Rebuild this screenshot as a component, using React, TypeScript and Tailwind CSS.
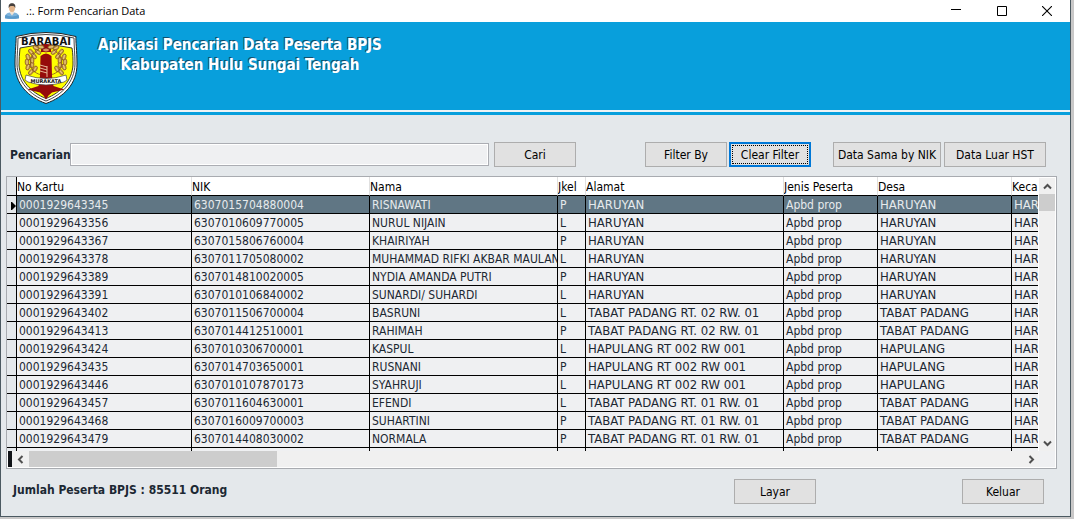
import type { ReactNode } from "react";

type Peserta = {
  kartu: string;
  nik: string;
  nama: string;
  jkel: "L" | "P";
  alamat: string;
  desa: string;
};

const rows: Peserta[] = [
  { kartu: "0001929643345", nik: "6307015704880004", nama: "RISNAWATI", jkel: "P", alamat: "HARUYAN", desa: "HARUYAN" },
  { kartu: "0001929643356", nik: "6307010609770005", nama: "NURUL NIJAIN", jkel: "L", alamat: "HARUYAN", desa: "HARUYAN" },
  { kartu: "0001929643367", nik: "6307015806760004", nama: "KHAIRIYAH", jkel: "P", alamat: "HARUYAN", desa: "HARUYAN" },
  { kartu: "0001929643378", nik: "6307011705080002", nama: "MUHAMMAD RIFKI AKBAR MAULANA", jkel: "L", alamat: "HARUYAN", desa: "HARUYAN" },
  { kartu: "0001929643389", nik: "6307014810020005", nama: "NYDIA AMANDA PUTRI", jkel: "P", alamat: "HARUYAN", desa: "HARUYAN" },
  { kartu: "0001929643391", nik: "6307010106840002", nama: "SUNARDI/ SUHARDI", jkel: "L", alamat: "HARUYAN", desa: "HARUYAN" },
  { kartu: "0001929643402", nik: "6307011506700004", nama: "BASRUNI", jkel: "L", alamat: "TABAT PADANG RT. 02 RW. 01", desa: "TABAT PADANG" },
  { kartu: "0001929643413", nik: "6307014412510001", nama: "RAHIMAH", jkel: "P", alamat: "TABAT PADANG RT. 02 RW. 01", desa: "TABAT PADANG" },
  { kartu: "0001929643424", nik: "6307010306700001", nama: "KASPUL", jkel: "L", alamat: "HAPULANG RT 002 RW 001", desa: "HAPULANG" },
  { kartu: "0001929643435", nik: "6307014703650001", nama: "RUSNANI", jkel: "P", alamat: "HAPULANG RT 002 RW 001", desa: "HAPULANG" },
  { kartu: "0001929643446", nik: "6307010107870173", nama: "SYAHRUJI", jkel: "L", alamat: "HAPULANG RT 002 RW 001", desa: "HAPULANG" },
  { kartu: "0001929643457", nik: "6307011604630001", nama: "EFENDI", jkel: "L", alamat: "TABAT PADANG RT. 01 RW. 01", desa: "TABAT PADANG" },
  { kartu: "0001929643468", nik: "6307016009700003", nama: "SUHARTINI", jkel: "P", alamat: "TABAT PADANG RT. 01 RW. 01", desa: "TABAT PADANG" },
  { kartu: "0001929643479", nik: "6307014408030002", nama: "NORMALA", jkel: "P", alamat: "TABAT PADANG RT. 01 RW. 01", desa: "TABAT PADANG" },
];

const headers = ["No Kartu", "NIK", "Nama", "Jkel", "Alamat", "Jenis Peserta", "Desa", "Kecamatan"];
const cellSizes = ["text-xs", "text-xs", "text-xs", "text-xs", "text-[13px]", "text-xs", "text-[13px]", "text-[13px]"];

function Button({ children, width }: { children: ReactNode; width: string }) {
  return (
    <button
      type="button"
      className={`h-[25px] shrink-0 whitespace-nowrap border border-[#adadad] bg-[#e1e1e1] text-center text-black ${width}`}
    >
      {children}
    </button>
  );
}

function Arrow({ d, label, className }: { d: string; label: string; className: string }) {
  return (
    <button type="button" aria-label={label} className={`flex shrink-0 items-center justify-center ${className}`}>
      <svg width="9" height="9" viewBox="0 0 9 9" fill="none" stroke="#505050" strokeWidth="2">
        <path d={d} />
      </svg>
    </button>
  );
}

function UserIcon() {
  return (
    <svg width="16" height="16" viewBox="0 0 16 16" aria-hidden="true">
      <path d="M1 15.200C.6 11.400 2.600 10 5.600 9.400h4.800c3 .6 5 2 4.600 5.800-4 .9-10 .9-14 0z" fill="#7fb4dc" />
      <path d="M1 15.200c-.1-1.500.1-2.600.7-3.400 3 2.300 9.600 2.300 12.600 0 .6.8.8 1.900.7 3.400-4 .9-10 .9-14 0z" fill="#5a9acb" />
      <path d="M5.600 9.400 8 12.600l2.400-3.200-.8-2H6.400z" fill="#f3e3d2" />
      <ellipse cx="8" cy="5" rx="3" ry="4" fill="#e3b58c" />
      <path d="M4.800 5.300C4.200 1.700 5.600.3 8 .3s3.900 1.400 3.200 5C10.800 3.600 10 3 8 3s-2.800.6-3.200 2.300z" fill="#46403c" />
    </svg>
  );
}

const grains = [
  [17, 40, 40], [14, 35, 20], [13, 30, 0], [14, 25, -20], [17, 20, -40], [22, 16, -60], [27, 15, -80],
  [21, 37, 30], [18, 33, 10], [18, 28, -10], [20, 24, -35], [24, 20, -55],
] as const;

function Wreath() {
  return (
    <g>
      {grains.map(([x, y, r]) => (
        <g key={`${x}-${y}`} transform={`rotate(${r} ${x} ${y})`}>
          <ellipse cx={x} cy={y} rx="1.900" ry="3.200" fill="#cfa04c" stroke="#86541f" strokeWidth=".7" />
          <path d={`M${x} ${y - 2}v4`} fill="none" stroke="#f3da9a" strokeWidth=".7" />
        </g>
      ))}
      <path d="M29 43C16 42 11 27 24 18" fill="none" stroke="#86541f" strokeWidth=".8" />
    </g>
  );
}

function Crest() {
  return (
    <svg width="64" height="72" viewBox="0 0 64 72" role="img" aria-label="Barabai" className="shrink-0">
      <path d="M2 4.500Q32-3.500 62 4.500C61.500 9 63 18 63 32 63 52 50 65 32 71.500 14 65 1 52 1 32 1 18 2.500 9 2 4.500z" fill="#fff" stroke="#222" strokeWidth="1" />
      <path d="M4 6Q32-1 60 6C60 14 61 22 61 32 60.500 50 48 63 32 69 16 63 3.500 50 3 32 3 22 4 14 4 6z" fill="none" stroke="#333" strokeWidth=".9" />
      <path d="M6 16Q32 10 58 16C59 22 59 27 59 33 58 49 47 60.500 32 66.500 17 60.500 6 49 5 33 5 27 5.500 22 6 16z" fill="#ff0" stroke="#222" strokeWidth=".9" />
      <path d="M6 14V7.500Q32 1 58 7.500V14Q32 9 6 14z" fill="#fff" />
      <text x="32" y="12.500" textAnchor="middle" className="font-['DejaVu_Sans'] text-[10px] font-bold" fill="#111">BARABAI</text>
      <path d="M27 13q5-2 10 0v7H27z" fill="#960b0b" />
      <Wreath />
      <g transform="translate(64 0) scale(-1 1)"><Wreath /></g>
      <path d="M26.500 24q5.500-5 11 0l.5 20 1.500 10 11 3.500L38 60.500l-3.500 3L32 67.500l-2.500-4-3.500-3-12.500-3L24.500 54 26 44z" fill="#960b0b" />
      <path d="M28 18q4-4 8 0-4 4-8 0z" fill="#d7925f" stroke="#770011" strokeWidth=".7" />
      <path d="M26 33l7 2M26 36l7 2M26 39l7 2M33 34v11" fill="none" stroke="#efc8a6" strokeWidth=".9" />
      <path d="M12 43q20 7 40 0l1 5-3 2q-18 6-36 0l-3-2z" fill="#fff" stroke="#444" strokeWidth=".7" />
      <text x="32" y="50.500" textAnchor="middle" className="font-['DejaVu_Sans'] text-[5px] font-bold" fill="#111">MURAKATA</text>
    </svg>
  );
}

export default function App() {
  return (
    <div className="bg-[#c9c8c8] pr-[3px] pb-[2px] font-['Tahoma','DejaVu_Sans_Condensed','Noto_Sans',sans-serif] text-xs text-[#1c2833]">
      <main className="border-r border-b border-l border-[#4b5961] bg-[#e4e8eb]">
        <header className="flex h-[22px] items-center bg-white pl-[3px] text-black">
          <UserIcon />
          <h1 className="ml-[6px] grow font-['Open_Sans',sans-serif] text-[11px] leading-4">.:. Form Pencarian Data</h1>
          <button type="button" aria-label="Minimize" className="flex h-full w-[46px] items-center justify-center">
            <svg width="10" height="10" viewBox="0 0 10 10"><path d="M0 3.500h10" stroke="#000" /></svg>
          </button>
          <button type="button" aria-label="Maximize" className="flex h-full w-[45px] items-center justify-center">
            <svg width="10" height="10" viewBox="0 0 10 10"><path d="M.5.5h9v9h-9z" fill="none" stroke="#000" /></svg>
          </button>
          <button type="button" aria-label="Close" className="flex h-full w-[46px] items-center justify-center">
            <svg width="10" height="10" viewBox="0 0 10 10"><path d="M0 0l10 10M10 0L0 10" stroke="#000" strokeWidth="1.100" /></svg>
          </button>
        </header>

        <section className="flex h-[88px] items-start bg-[#089fdc] pt-[10px] pl-[13px]">
          <Crest />
          <h2 className="ml-5 pt-[3px] text-center text-[15px] leading-5 font-bold text-white [text-shadow:-1px_-1px_0_#14506e]">
            Aplikasi Pencarian Data Peserta BPJS
            <br />
            Kabupaten Hulu Sungai Tengah
          </h2>
        </section>
        <div className="h-[5px] border-t-2 border-[#eef3f5] bg-[#089fdc]" />

        <form className="flex items-center pt-[27px] pr-6 pl-[9px]" onSubmit={(e) => e.preventDefault()}>
          <label htmlFor="pencarian" className="w-[60px] shrink-0 font-bold">Pencarian</label>
          <input
            id="pencarian"
            type="text"
            className="h-[23px] w-[419px] shrink border border-[#abadb3] bg-[#eff0f2] px-1 inset-ring inset-ring-white"
          />
          <div className="ml-[5px] flex"><Button width="w-[82px]">Cari</Button></div>
          <div className="ml-auto flex gap-[2px]">
            <Button width="w-[82px]">Filter By</Button>
            <button
              type="button"
              className="h-[25px] w-[82px] shrink-0 border-2 border-[#0078d7] bg-[#e1e1e1] p-px text-black"
            >
              <span className="flex h-full items-center justify-center border border-dotted border-black whitespace-nowrap">Clear Filter</span>
            </button>
          </div>
          <div className="ml-[22px] flex gap-[3px]">
            <Button width="w-[108px]">Data Sama by NIK</Button>
            <Button width="w-[102px]">Data Luar HST</Button>
          </div>
        </form>

        <section className="mt-[9px] mr-[13px] ml-[5px] border border-[#a8abb0] bg-white">
          <div className="flex">
            <div className="min-w-0 grow overflow-hidden">
              <table className="w-full table-fixed border-separate border-spacing-0">
                <colgroup>
                  <col className="w-[10px]" />
                  <col className="w-[175px]" />
                  <col className="w-[178px]" />
                  <col className="w-[188px]" />
                  <col className="w-[28px]" />
                  <col className="w-[198px]" />
                  <col className="w-[94px]" />
                  <col className="w-[134px]" />
                  <col />
                </colgroup>
                <thead>
                  <tr>
                    <td className="h-[19px] border-r border-b border-black bg-[#e4e8eb] p-0" />
                    {headers.map((h) => (
                      <th
                        key={h}
                        scope="col"
                        className="h-[19px] overflow-hidden border-r border-b border-r-[#e0e0e0] border-b-black bg-white p-0 pt-[2px] text-left leading-4 font-normal whitespace-nowrap text-black last:border-r-0"
                      >
                        {h}
                      </th>
                    ))}
                  </tr>
                </thead>
                <tbody>
                  {rows.map((r, i) => (
                    <tr key={r.kartu} className={i === 0 ? "bg-[#607684] text-[#e6eaec]" : "bg-[#eff0f2]"}>
                      <td className="h-[18px] border-r border-b border-black bg-[#e4e8eb] p-0">
                        {i === 0 && (
                          <svg width="5" height="8" viewBox="0 0 5 8" className="mt-[2px] ml-1">
                            <path d="M0 0h1l4 4-4 4H0z" fill="#000" />
                          </svg>
                        )}
                      </td>
                      {[r.kartu, r.nik, r.nama, r.jkel, r.alamat, "Apbd prop", r.desa, "HARUYAN"].map((v, c) => (
                        <td
                          key={c}
                          className={`h-[18px] overflow-hidden border-r border-b border-black p-0 pt-px pl-[2px] leading-4 whitespace-nowrap last:border-r-0 ${cellSizes[c]}`}
                        >
                          {v}
                        </td>
                      ))}
                    </tr>
                  ))}
                  <tr className="bg-[#eff0f2]" aria-hidden="true">
                    <td className="h-[3px] border-r border-black bg-[#e4e8eb] p-0" />
                    {headers.map((h) => (
                      <td key={h} className="h-[3px] border-r border-black p-0 last:border-r-0" />
                    ))}
                  </tr>
                </tbody>
              </table>
            </div>
            <div className="mt-px mr-px ml-px flex w-4 shrink-0 flex-col bg-[#f0f0f0]">
              <Arrow label="Scroll up" d="M1 6.500L4.500 3 8 6.500" className="h-4" />
              <div className="h-[17px] bg-[#cdcdcd]" />
              <div className="grow" />
              <Arrow label="Scroll down" d="M1 2.500L4.500 6 8 2.500" className="h-4" />
            </div>
          </div>
          <div className="m-px mt-0 flex h-4 bg-[#f0f0f0]">
            <div className="w-1 bg-[#111418]" />
            <Arrow label="Scroll left" d="M6.500 1L3 4.500 6.500 8" className="w-[17px]" />
            <div className="w-[248px] bg-[#cdcdcd]" />
            <div className="grow" />
            <Arrow label="Scroll right" d="M2.500 1L6 4.500 2.500 8" className="w-4" />
            <div className="w-4 bg-[#eff0f2]" />
          </div>
        </section>

        <footer className="flex items-center pt-[10px] pr-[26px] pb-3 pl-3">
          <p className="grow pb-1 font-bold">Jumlah Peserta BPJS : 85511 Orang</p>
          <div className="flex gap-[146px]">
            <Button width="w-[82px]">Layar</Button>
            <Button width="w-[82px]">Keluar</Button>
          </div>
        </footer>
      </main>
    </div>
  );
}
